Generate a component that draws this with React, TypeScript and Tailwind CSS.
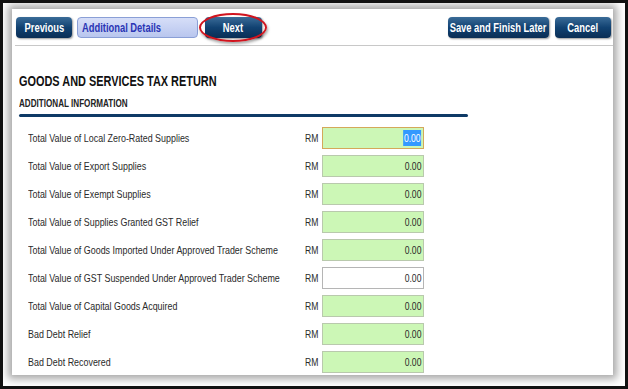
import React from 'react';

const font = { fontFamily: '"Liberation Sans", Arial, sans-serif' };

const rows = [
  { label: 'Total Value of Local Zero-Rated Supplies', focus: true },
  { label: 'Total Value of Export Supplies' },
  { label: 'Total Value of Exempt Supplies' },
  { label: 'Total Value of Supplies Granted GST Relief' },
  { label: 'Total Value of Goods Imported Under Approved Trader Scheme' },
  { label: 'Total Value of GST Suspended Under Approved Trader Scheme', plain: true },
  { label: 'Total Value of Capital Goods Acquired' },
  { label: 'Bad Debt Relief' },
  { label: 'Bad Debt Recovered' },
];

// squeezes text horizontally, like the condensed font of the screenshot
const Narrow: React.FC<{ children: React.ReactNode; origin?: string; className?: string }> = ({
  children,
  origin = 'origin-left',
  className = '',
}) => <span className={`inline-block whitespace-nowrap scale-x-[0.78] ${origin} ${className}`}>{children}</span>;

const NavButton: React.FC<{ children: React.ReactNode; className?: string }> = ({ children, className = '' }) => (
  <button
    className={`h-[21px] rounded-[4px] bg-gradient-to-b from-[#3a6c98] via-[#114272] to-[#0a2e55] text-white text-[12px] font-bold shadow-[1px_1px_2px_rgba(0,0,0,0.4)] flex items-center justify-center overflow-hidden ${className}`}
  >
    <Narrow origin="origin-center">{children}</Narrow>
  </button>
);

export default function App() {
  return (
    <div className="w-[628px] h-[389px] border-[3px] border-[#111] bg-white pl-[9px] pt-[6px] pr-[12px] pb-[11px] overflow-hidden" style={font}>
      <div className="h-full bg-white shadow-[0_0_8px_4px_rgba(0,0,0,0.35)] overflow-hidden">
        {/* top bar */}
        <div className="flex items-center pt-[8px] pl-[4px] pr-[2px]">
          <NavButton className="w-[56px]">Previous</NavButton>
          <div className="ml-[5px] w-[121px] h-[21px] rounded-[4px] border border-[#8a9fd6] bg-gradient-to-b from-[#d6def8] to-[#b9c6ee] text-[#2a35b5] text-[12px] font-bold flex items-center pl-[4px]">
            <Narrow>Additional Details</Narrow>
          </div>
          <div className="relative ml-[7px]">
            <NavButton className="w-[57px]">Next</NavButton>
            <div className="absolute -left-[6px] -top-[4px] w-[68px] h-[29px] rounded-[50%] border-2 border-[#d0141e] shadow-[1px_2px_3px_rgba(0,0,0,0.35)]" />
          </div>
          <div className="flex-1" />
          <NavButton className="w-[101px]">Save and Finish Later</NavButton>
          <NavButton className="ml-[6px] w-[56px]">Cancel</NavButton>
        </div>
        <div className="mt-[7px] h-px bg-[#c8c8c8] ml-[3px]" />

        <div className="pl-[7px] pt-[28px]">
          <h1 className="text-[14px] font-bold text-[#111] leading-none">
            <Narrow className="scale-x-[0.8]">GOODS AND SERVICES TAX RETURN</Narrow>
          </h1>
          <h2 className="mt-[11px] text-[10px] font-bold text-[#222] leading-none">
            <Narrow className="scale-x-[0.81]">ADDITIONAL INFORMATION</Narrow>
          </h2>
          <div className="mt-[5px] w-[449px] h-[3px] rounded-full bg-[#0e3a66]" />

          <div className="mt-[10px] flex flex-col gap-[6px]">
            {rows.map((r) => (
              <div key={r.label} className="flex items-center h-[22px] text-[11px] text-[#2a2a2a]">
                <div className="w-[286px] pl-[9px]">
                  <Narrow className="scale-x-[0.81]">{r.label}</Narrow>
                </div>
                <div className="w-[17px]">
                  <Narrow>RM</Narrow>
                </div>
                <div
                  className={`w-[102px] h-[22px] flex items-center justify-end pr-[2px] border ${
                    r.focus
                      ? 'border-[#d4a85a] bg-[#ccf7b6]'
                      : r.plain
                      ? 'border-[#b5b5b5] bg-white'
                      : 'border-[#b9c9ad] bg-[#ccf7b6]'
                  }`}
                >
                  {r.focus ? (
                    <Narrow origin="origin-right" className="bg-[#3399ff] text-white px-px">0.00</Narrow>
                  ) : (
                    <Narrow origin="origin-right">0.00</Narrow>
                  )}
                </div>
              </div>
            ))}
          </div>
        </div>
      </div>
    </div>
  );
}
